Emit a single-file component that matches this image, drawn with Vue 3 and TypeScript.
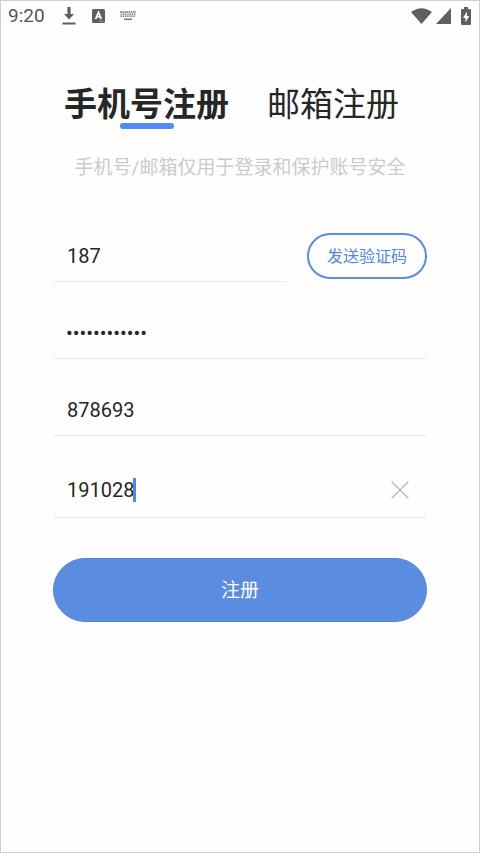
<script setup lang="ts">
import { computed, ref } from 'vue'

type Mode = 'phone' | 'email'

const tabs: { id: Mode; label: string }[] = [
  { id: 'phone', label: '手机号注册' },
  { id: 'email', label: '邮箱注册' },
]
const mode = ref<Mode>('phone')
const phone = ref('187')
const password = ref('abcdef123456')
const code = ref('878693')
const invite = ref('191028')

const caretStyle = computed(() => ({ left: `calc(13px + ${invite.value.length}ch)` }))
</script>

<template>
  <div class="screen">
    <header class="status">
      <time class="clock">9:20</time>
      <svg class="download" width="14" height="18" viewBox="0 0 14 18" aria-hidden="true">
        <path d="M5.4 0h3.2v7H12l-5 5.4L2 7h3.4zM.5 15.6h13v1.8H.5z" fill="#5f5f5f" />
      </svg>
      <svg class="letter" width="13" height="14" viewBox="0 0 13 14" aria-hidden="true">
        <rect width="13" height="14" rx="1.5" fill="#5f5f5f" />
        <path d="M3.6 10.2 6.5 3.4l2.9 6.8M4.8 8h3.4" fill="none" stroke="#fff" stroke-width="1.7" />
        <path d="M7 12.2h4.5" stroke="#aaa" stroke-width=".8" />
      </svg>
      <svg class="keyboard" width="16" height="10" viewBox="0 0 16 10" aria-hidden="true">
        <g fill="none" stroke="#666" stroke-width="1.3">
          <path d="M0 1h16" stroke-dasharray="1.5 .7" />
          <path d="M.8 3.1h15" stroke-dasharray="1.4 .8" />
          <path d="M.3 5.2h15.4" stroke-dasharray="1.5 .7" />
          <path d="M4 8.3h8" />
        </g>
      </svg>
      <span class="spacer"></span>
      <svg class="wifi" width="21" height="16" viewBox="0 0 21 16" aria-hidden="true">
        <path d="M0 4Q10.5-3.6 21 4L10.5 16z" fill="#5f5f5f" />
      </svg>
      <svg class="signal" width="15" height="16" viewBox="0 0 15 16" aria-hidden="true">
        <path d="M15 0v16H0z" fill="#5f5f5f" />
      </svg>
      <svg width="10" height="18" viewBox="0 0 10 18" aria-hidden="true">
        <path d="M3 0h4v2h2q1 0 1 1v14q0 1-1 1H1q-1 0-1-1V3q0-1 1-1h2z" fill="#5f5f5f" />
        <path d="M6 4.5 2 11h2.5v4.5L8.2 9H5.8z" fill="#fff" />
      </svg>
    </header>

    <main class="content">
      <nav class="tabs">
        <button
          v-for="tab in tabs"
          :key="tab.id"
          type="button"
          class="tab"
          :class="{ active: mode === tab.id }"
          @click="mode = tab.id"
        >
          {{ tab.label }}
        </button>
      </nav>
      <p class="hint">手机号/邮箱仅用于登录和保护账号安全</p>

      <form class="form" @submit.prevent>
        <div class="row">
          <div class="field">
            <input v-model="phone" type="tel" aria-label="手机号" />
          </div>
          <button type="button" class="send">发送验证码</button>
        </div>
        <div class="field">
          <input v-model="password" type="password" autocomplete="off" aria-label="密码" />
        </div>
        <div class="field">
          <input v-model="code" type="text" inputmode="numeric" aria-label="验证码" />
        </div>
        <div class="field current">
          <input v-model="invite" type="text" inputmode="numeric" aria-label="邀请码" />
          <span class="caret" :style="caretStyle"></span>
          <button type="button" class="clear" aria-label="清除" @click="invite = ''">
            <svg width="18" height="18" viewBox="0 0 18 18" aria-hidden="true">
              <path d="M.7.7l16.6 16.6M17.3.7.7 17.3" stroke="#bdbdbd" stroke-width="1.5" />
            </svg>
          </button>
        </div>
        <button type="submit" class="submit">注册</button>
      </form>
    </main>
  </div>
</template>

<style>
body {
  background: #fefefe;
}
</style>

<style scoped>
.screen {
  box-sizing: border-box;
  min-height: 100vh;
  border: 1px solid #d0d0d0;
  background: #fefefe;
  color: #262626;
  font-family: Roboto, "Noto Sans CJK SC", sans-serif;
}
button,
input {
  margin: 0;
  padding: 0;
  border: 0;
  background: none;
  color: inherit;
  font-family: inherit;
}
button {
  cursor: pointer;
}
.status {
  display: flex;
  align-items: center;
  height: 30px;
  padding: 0 8px 0 7px;
}
.clock {
  font-size: 19px;
  line-height: 30px;
  color: #555;
}
.download {
  margin-left: 17px;
}
.letter {
  margin-left: 16px;
}
.keyboard {
  margin-left: 15px;
}
.spacer {
  flex: 1;
}
.wifi {
  margin-right: 4px;
}
.signal {
  margin-right: 10px;
}
.content {
  padding: 50px 52px 0;
}
.tabs {
  display: flex;
  gap: 38px;
  padding-left: 11px;
}
.tab {
  position: relative;
  height: 48px;
  font-size: 33px;
  line-height: 48px;
  white-space: nowrap;
}
.tab.active {
  font-weight: 700;
}
.tab.active::after {
  content: "";
  position: absolute;
  bottom: 0;
  left: 50%;
  width: 54px;
  height: 6px;
  margin-left: -27px;
  border-radius: 3px;
  background: #508bf7;
}
.hint {
  display: flex;
  justify-content: center;
  margin: 25px 0 0;
  font-size: 19px;
  line-height: 28px;
  white-space: nowrap;
  color: #cbcbcb;
}
.form {
  display: flex;
  flex-direction: column;
  gap: 26px;
  margin-top: 49px;
}
.row {
  display: flex;
  gap: 20px;
}
.field {
  position: relative;
  display: flex;
  flex: 1 1 auto;
  align-items: center;
  min-width: 0;
  height: 50px;
  border-bottom: 1px solid #ebebeb;
  font-size: 20px;
}
.field input {
  flex: 1;
  min-width: 0;
  height: 100%;
  padding: 0 14px;
  font-size: 20px;
  outline: none;
  caret-color: #508bf7;
}
.field input[type="password"] {
  padding-left: 13px;
}
.current {
  height: 55px;
}
.current input {
  caret-color: transparent;
}
.caret {
  position: absolute;
  top: 16px;
  width: 3px;
  height: 24px;
  background: #5088e5;
}
.clear {
  display: flex;
  margin-right: 18px;
}
.send {
  flex: none;
  width: 120px;
  height: 46px;
  margin-top: 2px;
  padding-bottom: 2px;
  border: 2px solid #5a8ce2;
  border-radius: 23px;
  font-size: 16px;
  color: #5288e4;
}
.submit {
  height: 64px;
  margin-top: 14px;
  padding-bottom: 3px;
  border: 1px solid #5086dc;
  border-radius: 32px;
  background: #5a8cdf;
  font-size: 19px;
  color: #fff;
}
</style>
